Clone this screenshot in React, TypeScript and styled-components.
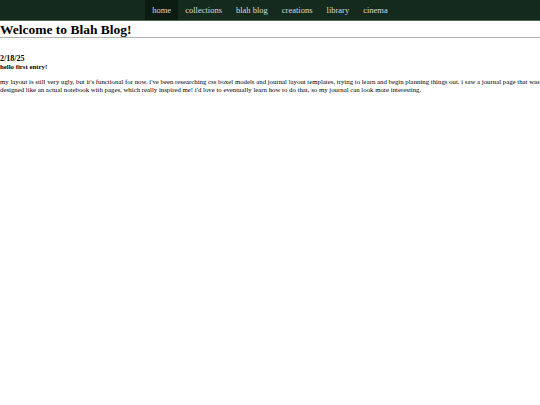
import styled, { createGlobalStyle } from "styled-components";

const GlobalStyle = createGlobalStyle`
  html, body {
    margin: 0;
    padding: 0;
    background: #ffffff;
    font-family: "Liberation Serif", "Times New Roman", serif;
    color: #000000;
  }
`;

const links = ["home", "collections", "blah blog", "creations", "library", "cinema"];

const App = () => {
  return (
    <>
      <GlobalStyle />
      <Nav>
        {links.map((l, i) => (
          <NavItem key={l} $active={i === 0}>
            {l}
          </NavItem>
        ))}
      </Nav>
      <Title>Welcome to Blah Blog!</Title>
      <Entry>
        <EntryDate>2/18/25</EntryDate>
        <EntryTitle>hello first entry!</EntryTitle>
        <EntryText>
          my layout is still very ugly, but it's functional for now. i've been
          researching css boxel models and journal layout templates, trying to
          learn and begin planning things out. i saw a journal page that was
          designed like an actual notebook with pages, which really inspired me!
          i'd love to eventually learn how to do that, so my journal can look
          more interesting.
        </EntryText>
      </Entry>
    </>
  );
};

export default App;

const Nav = styled.nav`
  display: flex;
  justify-content: center;
  height: 20px;
  background: #142a1c;
  border-bottom: 1px solid #4d6655;
`;

const NavItem = styled.a<{ $active?: boolean }>`
  display: flex;
  align-items: center;
  padding: 0 7px;
  font-size: 8.5px;
  color: #d8dcd8;
  background: ${(p) => (p.$active ? "#0d1c12" : "transparent")};
  cursor: pointer;
`;

const Title = styled.h1`
  margin: 0;
  padding: 1px 0 0;
  font-size: 13.5px;
  font-weight: bold;
  line-height: 15px;
  border-bottom: 1px solid #b3b3b3;
`;

const Entry = styled.section`
  padding-top: 16px;
`;

const EntryDate = styled.h2`
  margin: 0;
  font-size: 8px;
  line-height: 9px;
  font-weight: bold;
`;

const EntryTitle = styled.h3`
  margin: 0;
  font-size: 6.8px;
  line-height: 8px;
  font-weight: bold;
`;

const EntryText = styled.p`
  margin: 7px 0 0;
  font-size: 6.8px;
  line-height: 8px;
`;
